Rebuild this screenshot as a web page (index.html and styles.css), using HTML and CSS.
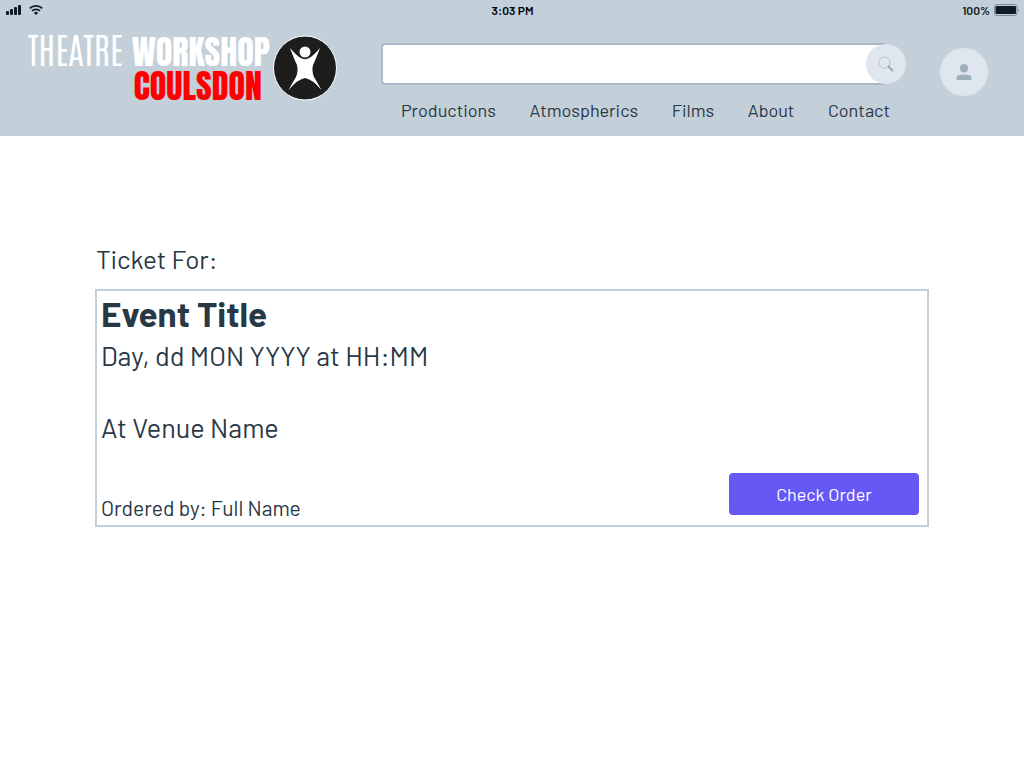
FILE: index.html
```
<!DOCTYPE html>
<html lang="en">
<head>
<meta charset="utf-8">
<meta name="viewport" content="width=device-width, initial-scale=1">
<title>Theatre Workshop Coulsdon</title>
<link rel="stylesheet" href="styles.css">
</head>
<body>
<header class="site-header">
  <div class="status-bar">
    <div class="status-left">
      <svg class="signal" width="16" height="10" viewBox="0 0 16 10" aria-hidden="true"><rect x="0" y="6" width="3" height="4" rx="1"/><rect x="4" y="4" width="3" height="6" rx="1"/><rect x="8" y="2" width="3" height="8" rx="1"/><rect x="12" y="0" width="3" height="10" rx="1"/></svg>
      <svg class="wifi" width="14" height="10" viewBox="0 0 14 10" aria-hidden="true"><path d="M.8 3.4a9 9 0 0 1 12.400 0M3 5.900a5.800 5.800 0 0 1 8 0" fill="none" stroke="#101a22" stroke-width="1.800"/><path d="M7 10 4.900 7.900a3 3 0 0 1 4.200 0z"/></svg>
    </div>
    <span class="clock">3:03 PM</span>
    <div class="status-right">
      <span>100%</span>
      <svg width="25" height="12" viewBox="0 0 25 12" aria-hidden="true"><rect x=".5" y=".5" width="22.500" height="11" rx="2.500" fill="none" stroke="#7e8b95"/><rect x="1.500" y="2" width="20.500" height="8" rx="1"/><path d="M23.500 4q1.500.5 1.500 2t-1.500 2z" fill="#8e9ca6"/></svg>
    </div>
  </div>
  <div class="masthead">
    <a class="brand" href="#">
      <span class="brand-name">
        <span class="brand-row"><span class="brand-light">THEATRE</span> <span class="brand-bold">WORKSHOP</span></span>
        <span class="brand-town">COULSDON</span>
      </span>
      <svg class="brand-mark" width="64" height="66" viewBox="0 0 64 66" aria-hidden="true"><ellipse cx="32" cy="33" rx="31.500" ry="32" fill="#1d1d1b" stroke="#fff"/><circle cx="32" cy="17" r="5.500" fill="#fff"/><path d="M17 13Q24 21 27 22.500Q32 26 37 22.500Q40 21 47 13Q42.500 25 40 30Q38.500 36 41 42Q44 47 48.500 55Q39 44 32 43Q25 44 15.500 55Q20 47 23 42Q25.500 36 24 30Q21.500 25 17 13Z" fill="#fff"/></svg>
    </a>
    <div class="center">
      <form class="search" role="search">
        <input class="search-input" type="search" aria-label="Search">
        <button class="search-button" type="button" aria-label="Search">
          <svg width="16" height="16" viewBox="0 0 16 16" aria-hidden="true"><circle cx="6.500" cy="6.500" r="5.500" fill="none" stroke="#b6c3cd"/><path d="m10.500 10.500 4 4" stroke="#94a4b0" stroke-width="1.800" stroke-linecap="round"/></svg>
        </button>
      </form>
      <nav class="nav" aria-label="Main">
        <a href="#">Productions</a>
        <a href="#">Atmospherics</a>
        <a href="#">Films</a>
        <a href="#">About</a>
        <a href="#">Contact</a>
      </nav>
    </div>
    <button class="account" type="button" aria-label="Account">
      <svg width="16" height="16" viewBox="0 0 16 16" aria-hidden="true"><ellipse cx="8" cy="4.200" rx="4" ry="4.200" fill="#9eafba"/><path d="M.5 16v-2.500Q.5 10.500 8 10.500t7.500 3V16z" fill="#9eafba"/></svg>
    </button>
  </div>
</header>
<main class="content">
  <h1 class="heading">Ticket For:</h1>
  <section class="ticket">
    <h2 class="event">Event Title</h2>
    <p class="detail">Day, dd MON YYYY at HH:MM</p>
    <p class="detail venue">At Venue Name</p>
    <div class="ticket-footer">
      <p class="ordered">Ordered by: Full Name</p>
      <button class="check" type="button">Check Order</button>
    </div>
  </section>
</main>
</body>
</html>
```
FILE: styles.css
```
* { box-sizing: border-box; }
body {
  margin: 0;
  background: #fff;
  color: #293845;
  font-family: Barlow, Roboto, "Liberation Sans", sans-serif;
}
h1, h2, p { margin: 0; }
button { border: 0; padding: 0; font: inherit; cursor: pointer; }
svg { display: block; flex: none; }

.site-header { background: #c3cfd9; padding-bottom: 13px; }
.status-bar {
  display: grid;
  grid-template-columns: 1fr auto 1fr;
  align-items: center;
  height: 20px;
  padding: 0 5px 0 6px;
  color: #101a22;
  fill: #101a22;
  font-size: 12px;
  font-weight: 600;
}
.status-left { display: flex; gap: 7px; }
.clock { color: #000; }
.status-right { display: flex; justify-content: flex-end; align-items: center; gap: 4px; }

.masthead { display: flex; align-items: flex-start; padding: 0 36px 0 28px; }
.brand { display: flex; align-items: flex-start; gap: 3px; color: #fff; text-decoration: none; }
.brand-mark { margin-top: 15px; }
.brand-name {
  display: flex;
  flex-direction: column;
  padding-top: 11px;
  font-family: Antonio, Oswald, "Liberation Sans Narrow", Roboto, sans-serif;
  font-size: 36px;
  line-height: 34px;
  white-space: nowrap;
}
.brand-light { font-weight: 300; }
.brand-bold, .brand-town { font-family: Anton, Antonio, Oswald, Roboto, sans-serif; font-size: 34px; font-weight: 400; }
.brand-town { align-self: flex-end; padding-right: 8px; color: #f00; }

.center { flex: 1; margin: 23px 34px 0 44px; }
.search { display: flex; align-items: center; }
.search-input {
  flex: 1;
  min-width: 0;
  height: 42px;
  margin-right: -20px;
  padding: 0 28px 0 12px;
  border: 2px solid #aab9c5;
  border-right: 0;
  border-radius: 4px 0 0 4px;
  background: #fff;
  font: inherit;
}
.search-button, .account {
  display: flex;
  align-items: center;
  justify-content: center;
  flex: none;
  border-radius: 50%;
  background: #dfe6ed;
}
.search-button { width: 40px; height: 40px; z-index: 1; }
.account { width: 48px; height: 48px; margin-top: 28px; }
.nav { display: flex; justify-content: space-between; padding: 12px 16px 0 20px; }
.nav a { color: #293845; font-size: 18px; line-height: 26px; text-decoration: none; }

.content { padding: 103px 95px 0; }
.heading { padding-left: 1px; font-size: 26px; font-weight: 400; line-height: 40px; }
.ticket { margin-top: 10px; padding: 2px 8px 4px 4px; border: 2px solid #c3cfd9; }
.event { font-size: 35px; font-weight: 700; line-height: 41px; }
.detail { font-size: 27px; line-height: 42px; }
.venue { margin-top: 30px; }
.ticket-footer { display: flex; justify-content: space-between; align-items: flex-start; margin-top: 25px; }
.ordered { padding-top: 23px; font-size: 21px; line-height: 24px; }
.check { width: 190px; height: 42px; margin-bottom: 6px; border-radius: 4px; background: #6558f5; color: #fff; font-size: 18px; }
```
